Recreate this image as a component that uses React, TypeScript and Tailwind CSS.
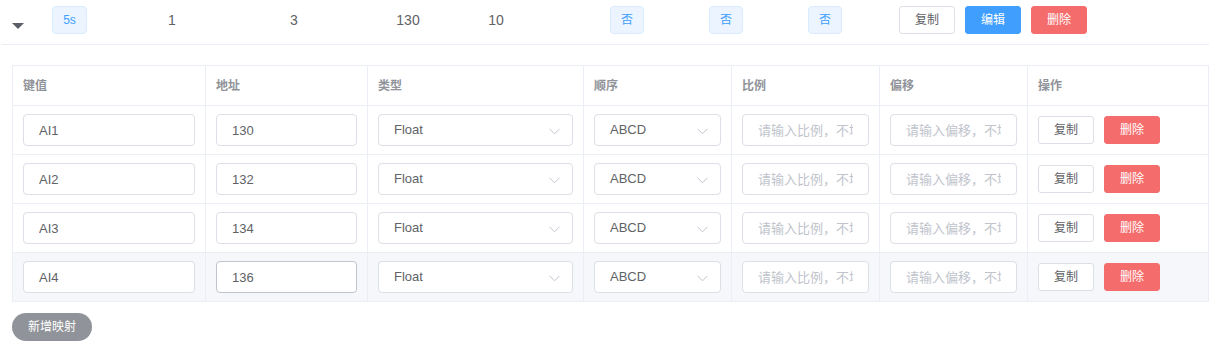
import React from "react";

const rows = [
  { key: "AI1", addr: "130" },
  { key: "AI2", addr: "132" },
  { key: "AI3", addr: "134" },
  { key: "AI4", addr: "136", hover: true },
];

const cols = "grid grid-cols-[193px_162px_216px_148px_148px_148px_181px]";
const cell = "border-r border-b border-[#ebeef5] px-[10px] flex items-center";
const inputCls =
  "w-full h-[32px] rounded-[4px] border bg-white px-[15px] text-[13px] text-[#606266] outline-none placeholder:text-[#c0c4cc]";

function Select({ value }: { value: string }) {
  return (
    <div className="w-full h-[32px] rounded-[4px] border border-[#dcdfe6] bg-white pl-[15px] pr-[12px] flex items-center justify-between text-[13px] text-[#606266]">
      <span>{value}</span>
      <svg width="11" height="7" viewBox="0 0 11 7" className="mt-[2px]">
        <path d="M0.5 0.8 L5.5 5.8 L10.5 0.8" fill="none" stroke="#c0c4cc" strokeWidth="1" />
      </svg>
    </div>
  );
}

function Tag({ text, w }: { text: string; w: string }) {
  return (
    <span className={`${w} h-[28px] flex items-center justify-center rounded-[4px] border border-[#d9ecff] bg-[#ecf5ff] text-[12px] text-[#409eff]`}>
      {text}
    </span>
  );
}

function Btn({ text, kind }: { text: string; kind: "plain" | "primary" | "danger" }) {
  const k =
    kind === "plain"
      ? "bg-white border-[#dcdfe6] text-[#606266]"
      : kind === "primary"
      ? "bg-[#409eff] border-[#409eff] text-white"
      : "bg-[#f56c6c] border-[#f56c6c] text-white";
  return (
    <button className={`w-[56px] h-[28px] rounded-[3px] border text-[12px] flex items-center justify-center ${k}`}>
      {text}
    </button>
  );
}

export default function App() {
  return (
    <div className="w-[1215px] h-[351px] bg-white text-[#606266] font-['Liberation_Sans','Noto_Sans_CJK_SC',sans-serif]">
      {/* expanded row summary */}
      <div className="ml-[2px] w-[1207px] h-[45px] border-b border-[#ebeef5] flex items-start pt-[6px] text-[14px]">
        <span className="ml-[10px] mt-[17px] w-0 h-0 border-l-[6px] border-r-[6px] border-t-[6px] border-l-transparent border-r-transparent border-t-[#5a5e66]" />
        <span className="ml-[28px]">
          <Tag text="5s" w="w-[35px]" />
        </span>
        <span className="ml-[55px] w-[60px] h-[28px] leading-[28px] text-center">1</span>
        <span className="ml-[62px] w-[60px] h-[28px] leading-[28px] text-center">3</span>
        <span className="ml-[54px] w-[60px] h-[28px] leading-[28px] text-center">130</span>
        <span className="ml-[28px] w-[60px] h-[28px] leading-[28px] text-center">10</span>
        <span className="ml-[84px]">
          <Tag text="否" w="w-[34px]" />
        </span>
        <span className="ml-[65px]">
          <Tag text="否" w="w-[34px]" />
        </span>
        <span className="ml-[65px]">
          <Tag text="否" w="w-[34px]" />
        </span>
        <div className="ml-[57px] flex gap-[10px]">
          <Btn text="复制" kind="plain" />
          <Btn text="编辑" kind="primary" />
          <Btn text="删除" kind="danger" />
        </div>
      </div>

      {/* mapping table */}
      <div className="mt-[20px] ml-[12px] w-[1197px] border-l border-t border-[#ebeef5]">
        <div className={`${cols} h-[40px] text-[12px] font-bold text-[#909399]`}>
          {["键值", "地址", "类型", "顺序", "比例", "偏移", "操作"].map((h) => (
            <div key={h} className={cell}>
              {h}
            </div>
          ))}
        </div>
        {rows.map((r) => (
          <div key={r.key} className={`${cols} h-[49px] ${r.hover ? "bg-[#f5f7fa]" : "bg-white"}`}>
            <div className={cell}>
              <input className={`${inputCls} border-[#dcdfe6]`} defaultValue={r.key} />
            </div>
            <div className={cell}>
              <input
                className={`${inputCls} ${r.hover ? "border-[#c0c4cc]" : "border-[#dcdfe6]"}`}
                defaultValue={r.addr}
              />
            </div>
            <div className={cell}>
              <Select value="Float" />
            </div>
            <div className={cell}>
              <Select value="ABCD" />
            </div>
            <div className={cell}>
              <input className={`${inputCls} border-[#dcdfe6]`} placeholder="请输入比例，不填默认为1" />
            </div>
            <div className={cell}>
              <input className={`${inputCls} border-[#dcdfe6]`} placeholder="请输入偏移，不填默认为0" />
            </div>
            <div className={`${cell} gap-[10px]`}>
              <Btn text="复制" kind="plain" />
              <Btn text="删除" kind="danger" />
            </div>
          </div>
        ))}
      </div>

      <button className="mt-[11px] ml-[12px] w-[80px] h-[28px] rounded-full bg-[#909399] text-white text-[12px] flex items-center justify-center">
        新增映射
      </button>
    </div>
  );
}
